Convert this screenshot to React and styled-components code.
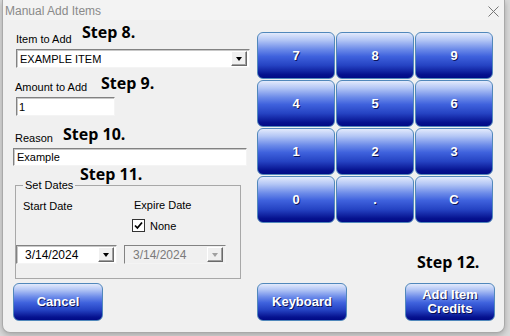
import React from "react";
import styled, { createGlobalStyle } from "styled-components";

const GlobalStyle = createGlobalStyle`
  * { box-sizing: border-box; }
  html, body { margin: 0; padding: 0; }
  body {
    width: 510px;
    height: 336px;
    overflow: hidden;
    background: #dadada;
    font-family: "Liberation Sans", Arial, sans-serif;
    color: #000;
  }
`;

const Window = styled.div`
  margin-left: 2px;
  width: 503px;
  height: 333px;
  background: #f0f0f0;
  border: 1px solid #a9a9a9;
  border-top: none;
  border-radius: 0 0 8px 8px;
  box-shadow: 0 2px 6px rgba(0, 0, 0, 0.25);
  display: flex;
  flex-direction: column;
  overflow: hidden;
`;

const TitleBar = styled.div`
  flex: none;
  height: 20px;
  display: flex;
  align-items: center;
  justify-content: space-between;
  padding: 2px 5px 0 2px;
  background: #f3f3f3;
  color: #8a8a8a;
  font-size: 12px;
  line-height: 16px;
`;

const Body = styled.div`
  padding-left: 10px;
  display: flex;
  flex-direction: column;
`;

const Main = styled.div`
  display: flex;
  gap: 7px;
  height: 259px;
`;

const LeftForm = styled.div`
  width: 237px;
  display: flex;
  flex-direction: column;
`;

const Row = styled.div`
  display: flex;
  align-items: flex-start;
  margin-top: ${p => p.mt}px;
  padding-left: ${p => p.indent || 0}px;
`;

const Label = styled.div`
  flex: none;
  width: ${p => (p.w ? `${p.w}px` : "auto")};
  margin-top: ${p => p.drop || 0}px;
  font-size: 11px;
  line-height: 13px;
  white-space: nowrap;
`;

const Step = styled.div`
  flex: none;
  margin-left: ${p => p.ml || 0}px;
  font-family: "Open Sans", "Liberation Sans", sans-serif;
  font-weight: 700;
  font-size: 16px;
  line-height: ${p => p.lh || 20}px;
  color: #000;
  white-space: nowrap;
`;

const Field = styled.div`
  display: flex;
  align-items: center;
  width: ${p => p.w}px;
  height: ${p => p.h || 19}px;
  margin-top: ${p => p.mt || 0}px;
  margin-left: ${p => p.ml || 0}px;
  padding: 0 2px 0 ${p => p.pad || 2}px;
  background: ${p => (p.disabled ? "#f0f0f0" : "#fff")};
  border: 1px solid;
  border-color: #828282 #f4f4f4 #f4f4f4 #828282;
  box-shadow: ${p => (p.disabled ? "none" : "inset 1px 1px 0 #c8c8c8")};
  font-size: ${p => p.fs || 11}px;
  color: ${p => (p.disabled ? "#7a7a7a" : "#000")};
  white-space: nowrap;
`;

const FieldText = styled.span`
  flex: 1;
  overflow: hidden;
`;

const DropButton = styled.span`
  flex: none;
  width: 16px;
  height: 15px;
  display: flex;
  align-items: center;
  justify-content: center;
  background: #f0f0f0;
  border: 1px solid;
  border-color: #fff #6a6a6a #6a6a6a #fff;
  box-shadow: inset -1px -1px 0 #a0a0a0;
`;

const Arrow = styled.span`
  width: 0;
  height: 0;
  border-left: 3.5px solid transparent;
  border-right: 3.5px solid transparent;
  border-top: 4px solid ${p => (p.disabled ? "#a0a0a0" : "#000")};
`;

const Group = styled.fieldset`
  margin: -4px 0 0 2px;
  width: 226px;
  height: 100px;
  padding: 0 6px 14px 7px;
  border: 1px solid #a8a8a8;
  display: grid;
  grid-template-columns: 111px 1fr;
`;

const Legend = styled.legend`
  padding: 0 2px;
  font-size: 11px;
  line-height: 13px;
`;

const Column = styled.div`
  display: flex;
  flex-direction: column;
`;

const CheckRow = styled.div`
  display: flex;
  align-items: center;
  gap: 5px;
  margin: 7px 0 0 -2px;
  height: 13px;
  font-size: 11px;
`;

const CheckBox = styled.span`
  width: 13px;
  height: 13px;
  background: #fff;
  border: 1px solid #333;
  display: flex;
  align-items: center;
  justify-content: center;
`;

const RightPanel = styled.div`
  width: 237px;
  padding-top: 12px;
  display: flex;
  flex-direction: column;
`;

const Keypad = styled.div`
  display: grid;
  grid-template-columns: repeat(3, 78px);
  grid-auto-rows: 47px;
  gap: 1px;
`;

const Glossy = styled.button`
  width: ${p => (p.w ? `${p.w}px` : "100%")};
  height: ${p => (p.h ? `${p.h}px` : "100%")};
  padding: 0;
  border: 1px solid #5188bb;
  border-radius: 6px;
  background: linear-gradient(
    to bottom,
    #e3eafc 0%,
    #b3c6f5 16%,
    #6c8be9 36%,
    #3f62dd 52%,
    #2543c3 72%,
    #06128f 92%,
    #000a86 100%
  );
  color: #fff;
  font-family: "Liberation Sans", Arial, sans-serif;
  font-weight: 700;
  font-size: 13px;
  line-height: 14px;
  text-shadow: 1px 1px 0 rgba(0, 0, 50, 0.75);
  cursor: pointer;
`;

const ButtonRow = styled.div`
  display: grid;
  grid-template-columns: 244px 148px 90px;
  margin-top: 4px;
`;

const keys = ["7", "8", "9", "4", "5", "6", "1", "2", "3", "0", ".", "C"];

function DateBox({ disabled, ml, w }) {
  return (
    <Field w={w} ml={ml} mt={13} pad={8} fs={12} disabled={disabled}>
      <FieldText>3/14/2024</FieldText>
      <DropButton>
        <Arrow disabled={disabled} />
      </DropButton>
    </Field>
  );
}

export default function App() {
  return (
    <>
      <GlobalStyle />
      <Window>
        <TitleBar>
          <span>Manual Add Items</span>
          <svg width="11" height="11" viewBox="0 0 11 11">
            <path d="M0.5 0.5 L10.5 10.5 M10.5 0.5 L0.5 10.5" stroke="#777" strokeWidth="1" />
          </svg>
        </TitleBar>
        <Body>
          <Main>
            <LeftForm>
              <Row mt={2} indent={3}>
                <Label w={66} drop={11}>Item to Add</Label>
                <Step>Step 8.</Step>
              </Row>
              <Field w={234} ml={3} mt={3} pad={3}>
                <FieldText>EXAMPLE ITEM</FieldText>
                <DropButton>
                  <Arrow />
                </DropButton>
              </Field>

              <Row mt={5} indent={2}>
                <Label w={86} drop={8}>Amount to Add</Label>
                <Step>Step 9.</Step>
              </Row>
              <Field w={99} ml={3} mt={3} pad={2}>
                <FieldText>1</FieldText>
              </Field>

              <Row mt={8} indent={2}>
                <Label w={48} drop={8}>Reason</Label>
                <Step>Step 10.</Step>
              </Row>
              <Field w={234} h={18} mt={3} pad={3}>
                <FieldText>Example</FieldText>
              </Field>

              <Row mt={-1}>
                <Step ml={67} lh={18}>Step 11.</Step>
              </Row>
              <Group>
                <Legend>Set Dates</Legend>
                <Column>
                  <Label drop={8}>Start Date</Label>
                </Column>
                <Column>
                  <Label drop={7}>Expire Date</Label>
                  <CheckRow>
                    <CheckBox>
                      <svg width="9" height="9" viewBox="0 0 9 9">
                        <path d="M1 4.5 L3.4 7 L8 1.5" stroke="#000" strokeWidth="1.8" fill="none" />
                      </svg>
                    </CheckBox>
                    <span>None</span>
                  </CheckRow>
                </Column>
                <DateBox w={101} ml={-7} />
                <DateBox w={102} ml={-10} disabled />
              </Group>
            </LeftForm>

            <RightPanel>
              <Keypad>
                {keys.map(k => (
                  <Glossy key={k}>{k}</Glossy>
                ))}
              </Keypad>
              <Row mt={29} indent={160}>
                <Step>Step 12.</Step>
              </Row>
            </RightPanel>
          </Main>

          <ButtonRow>
            <Glossy w={90} h={38}>Cancel</Glossy>
            <Glossy w={90} h={38}>Keyboard</Glossy>
            <Glossy w={90} h={38}>
              Add Item
              <br />
              Credits
            </Glossy>
          </ButtonRow>
        </Body>
      </Window>
    </>
  );
}
